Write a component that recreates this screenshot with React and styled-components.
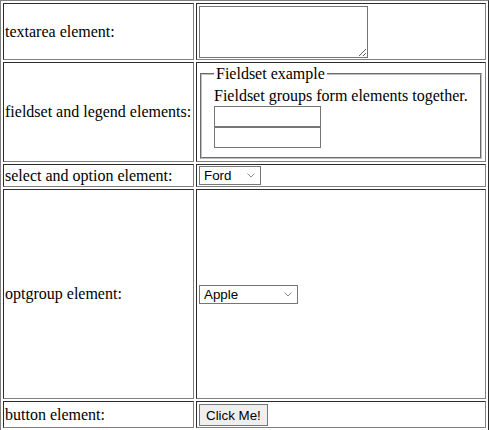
import React from "react"
import styled, { createGlobalStyle } from "styled-components"

const GlobalStyle = createGlobalStyle`
  html, body {
    margin: 0;
    padding: 0;
    background: #fff;
  }
  body {
    font-family: "Liberation Serif", "Times New Roman", serif;
    font-size: 16px;
    color: #000;
  }
`

const FormTable = styled.table`
  width: 489px;
  border: 1px outset #808080;
  border-spacing: 2px;
  border-collapse: separate;
  box-sizing: border-box;
`

const Row = styled.tr`
  height: ${(p) => p.h}px;
`

const Label = styled.td`
  box-sizing: border-box;
  height: ${(p) => p.h}px;
  width: 191px;
  border: 1px inset #808080;
  padding: 1px;
  white-space: nowrap;
  vertical-align: middle;
`

const Cell = styled.td`
  box-sizing: border-box;
  border: 1px inset #808080;
  padding: 1px;
  vertical-align: middle;
`

const TextArea = styled.textarea`
  display: block;
  box-sizing: border-box;
  width: 169px;
  height: 52px;
  margin: 1px 0 0 1px;
  border: 1px solid #767676;
  font-family: "Liberation Mono", monospace;
  font-size: 13px;
`

const Box = styled.fieldset`
  margin: 0 2px 1px 2px;
  padding: 2px 12px 9px 12px;
  border: 2px groove #c0c0c0;
`

const Legend = styled.legend`
  padding: 0 2px;
`

const Note = styled.div`
  margin: 2px 0 1px 0;
`

const Field = styled.input`
  display: block;
  box-sizing: border-box;
  width: 107px;
  height: 21px;
  margin: 0;
  border: 1px solid #767676;
  padding: 1px 2px;
  font-family: "Liberation Sans", Arial, sans-serif;
  font-size: 13px;
`

const SelectWrap = styled.div`
  position: relative;
  display: flex;
  width: fit-content;
  margin-left: 1px;
`

const Dropdown = styled.select`
  display: block;
  appearance: none;
  box-sizing: border-box;
  width: ${(p) => p.w}px;
  height: 19px;
  margin: 0;
  padding: 0 0 0 4px;
  border: 1px solid #767676;
  border-radius: 0;
  background: #fff;
  color: #000;
  font-family: "Liberation Sans", Arial, sans-serif;
  font-size: 13.33px;
`

const Chevron = styled.svg`
  position: absolute;
  right: 6px;
  top: 7px;
  pointer-events: none;
`

const Button = styled.button`
  display: block;
  box-sizing: border-box;
  height: 22px;
  margin: 1px 0 0 1px;
  padding: 1px 6px;
  border: 1px solid #767676;
  border-radius: 0;
  background: #efefef;
  color: #000;
  font-family: "Liberation Sans", Arial, sans-serif;
  font-size: 13.33px;
`

function Select({ w, defaultValue, children }) {
  return (
    <SelectWrap>
      <Dropdown w={w} defaultValue={defaultValue}>
        {children}
      </Dropdown>
      <Chevron width="8" height="5" viewBox="0 0 8 5">
        <path d="M0.5 0.5 L4 4 L7.5 0.5" fill="none" stroke="#8a8a8a" strokeWidth="1" />
      </Chevron>
    </SelectWrap>
  )
}

export default function App() {
  return (
    <>
      <GlobalStyle />
      <FormTable>
        <tbody>
          <Row h={56}>
            <Label h={56}>textarea element:</Label>
            <Cell>
              <TextArea />
            </Cell>
          </Row>
          <Row h={100}>
            <Label h={100}>fieldset and legend elements:</Label>
            <Cell>
              <Box>
                <Legend>Fieldset example</Legend>
                <Note>Fieldset groups form elements together.</Note>
                <Field type="text" />
                <Field type="text" />
              </Box>
            </Cell>
          </Row>
          <Row h={23}>
            <Label h={23}>select and option element:</Label>
            <Cell>
              <Select w={62} defaultValue="ford">
                <option value="ford">Ford</option>
                <option value="volvo">Volvo</option>
                <option value="saab">Saab</option>
              </Select>
            </Cell>
          </Row>
          <Row h={210}>
            <Label h={210}>optgroup element:</Label>
            <Cell>
              <Select w={99} defaultValue="apple">
                <optgroup label="Fruits">
                  <option value="apple">Apple</option>
                  <option value="banana">Banana</option>
                </optgroup>
                <optgroup label="Vegetables">
                  <option value="carrot">Carrot</option>
                  <option value="pea">Pea</option>
                </optgroup>
              </Select>
            </Cell>
          </Row>
          <Row h={27}>
            <Label h={27}>button element:</Label>
            <Cell>
              <Button type="button">Click Me!</Button>
            </Cell>
          </Row>
        </tbody>
      </FormTable>
    </>
  )
}
